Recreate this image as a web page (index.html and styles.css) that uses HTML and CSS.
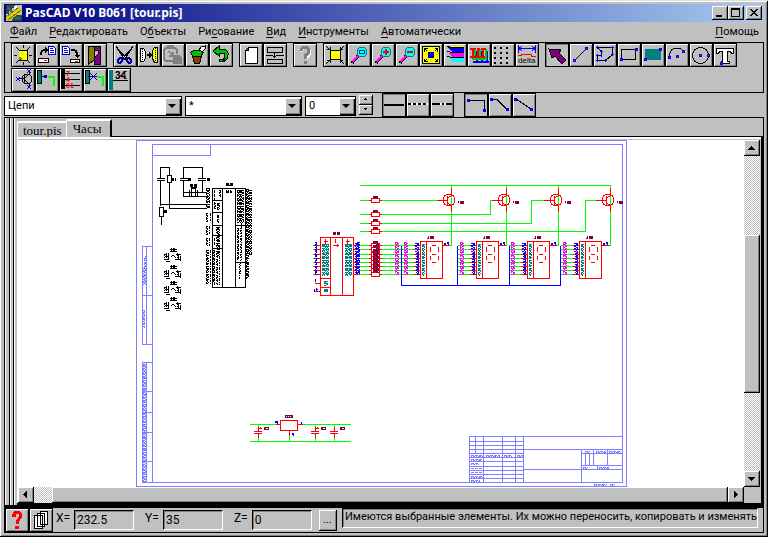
FILE: index.html
```html
<!DOCTYPE html>
<html lang="ru">
<head>
<meta charset="utf-8">
<title>PasCAD V10 B061 [tour.pis]</title>
<link rel="stylesheet" href="styles.css">
</head>
<body>
<div class="window">
  <header class="titlebar">
    <svg class="app-icon" viewBox="0 0 16 16" aria-hidden="true"><path fill="#c0c0c0" d="M0 0h16v16H0z"/><path fill="#404040" d="M0 0h9v3H6v3H3v3H0zM8 10h8v6H6z"/><path fill="#fff" d="M8 1h3v3H8zM1 9h3v2H1z"/><path fill="#e0d000" d="M0 12 12 3h4v3L4 15H0z"/><path stroke="#707000" d="M2 15 15 5M0 12 12 3"/><path stroke="#008080" stroke-width="2" d="m2 3 4 4M9 13h5"/></svg>
    <h1 class="title">PasCAD V10 B061 [tour.pis]</h1>
    <div class="caption-buttons">
      <button class="cap" aria-label="Minimize"><svg viewBox="0 0 12 10"><path d="M2 7h6v2H2z"/></svg></button>
      <button class="cap" aria-label="Maximize"><svg viewBox="0 0 12 10"><path fill-rule="evenodd" d="M1 0h9v9H1zM2 2v6h7V2z"/></svg></button>
      <button class="cap cap-close" aria-label="Close"><svg viewBox="0 0 12 10"><path d="M2 1h2v1h1v1h2V2h1V1h2v1H9v1H8v1H7v1h1v1h1v1h1v1H8V7H7V6H5v1H4v1H2V7h1V6h1V5h1V4H4V3H3V2H2z"/></svg></button>
    </div>
  </header>

  <nav class="menu">
    <a href="#"><u>Ф</u>айл</a>
    <a href="#"><u>Р</u>едактировать</a>
    <a href="#">О<u>б</u>ъекты</a>
    <a href="#">Ри<u>с</u>ование</a>
    <a href="#"><u>В</u>ид</a>
    <a href="#"><u>И</u>нструменты</a>
    <a href="#"><u>А</u>втоматически</a>
    <a href="#" class="menu-help"><u>П</u>омощь</a>
  </nav>

  <div class="toolbar">
    <div class="tool-row">
      <div class="group">
        <button class="tool" aria-label="New"><svg viewBox="1 1 22 22"><path stroke="#000" d="M3 12h3M18 12h3M12 2v3M12 19v3M5 4l3 3M19 4l-3 3M5 20l3-3M19 20l-3-3" fill="none"/><path fill="#000" d="M8 7h9v11H8z"/><path fill="#ff0" d="M8 8h8v9H8z"/><path fill="#808000" d="M8 14h2v1h1v2H8z"/></svg></button>
        <button class="tool" aria-label="Open"><svg viewBox="1 1 22 22"><path fill="#000" d="M5 12V9h1V7h2V6h2V4l4 3-4 3V8H8v1H7v3z"/><path fill="#fff" stroke="#0000c0" d="M13.500 3.500h5l2 2v6h-7z"/><path stroke="#0000c0" d="M15 5.500h3M15 7.500h4M15 9.500h4"/><path fill="#fff" stroke="#000" d="M3.500 15.500h10v4h-10z"/><path fill="red" d="M9 17h3v1H9z"/></svg></button>
        <button class="tool" aria-label="Save"><svg viewBox="1 1 22 22"><path fill="#fff" stroke="#0000c0" d="M3.500 3.500h5l2 2v6h-7z"/><path stroke="#0000c0" d="M5 5.500h3M5 7.500h4M5 9.500h4"/><path fill="#000" d="M12 6h4v1h2v2h1v3h2l-3 3-3-3h2v-2h-1V8h-4z"/><path fill="#fff" stroke="#000" d="M11.500 16.500h9v3h-9z"/><path fill="red" d="M16 18h3v1h-3z"/></svg></button>
        <button class="tool" aria-label="Exit"><svg viewBox="1 1 22 22"><path fill="#808000" stroke="#000" d="M5.500 3.500h6v13l-6 5z"/><path fill="#800080" stroke="#000" d="M11.500 3.500h6v18h-6v-7l4-4v-3h-4z"/></svg></button>
      </div>
      <div class="group">
        <button class="tool" aria-label="Cut"><svg viewBox="1 1 22 22"><path fill="#fff" stroke="#000" d="M3 3.500 14 16l-2 1zM20 3.500 9 16l2 1z"/><path fill="none" stroke="#0000a0" stroke-width="2" d="M9 15c-3 0-4 1-4 3 0 3 3 3 4-1zM14 15c3 0 4 1 4 3 0 3-3 3-4-1z"/></svg></button>
        <button class="tool" aria-label="Convert"><svg viewBox="1 1 22 22"><path fill="#fff" stroke="#000" d="M3.500 5.500h3l2 3v7l-2 3h-3z"/><path fill="#ff0" stroke="#000" d="M20.500 4.500h-3l-2 3v8l2 4h3z"/><path stroke="#000" stroke-dasharray="1 1" d="M5.500 6v12M18.500 5v14"/><path fill="#000" d="M10 11h2V9l3 3-3 3v-2h-2z"/></svg></button>
        <button class="tool" aria-label="Paste" disabled><svg viewBox="1 1 22 22"><path fill="none" stroke="#808080" stroke-width="2" d="M12 18H5l-2-2V7l2-2h9l2 2v4M7 5V3h5v2"/><path fill="#808080" d="M6 8h2l3 3V9h2v5H8v-2h2zM12 12h6l3 3v6h-9z"/></svg></button>
        <button class="tool" aria-label="Delete"><svg viewBox="1 1 22 22"><path fill="#fff" stroke="#000" d="m14 7 2-3 4-1v3l-3 3z"/><path fill="#00c000" stroke="#000" d="M5.500 9.500 9 7.500h6l3 2-2 4H8z"/><path fill="#804000" stroke="#000" d="M7.500 13.500h9l-2 7h-5z"/><path stroke="red" stroke-dasharray="1 1" d="m10 15 4 4m0-4-4 4"/></svg></button>
        <button class="tool" aria-label="Undo"><svg viewBox="1 1 22 22"><path fill="#00c000" stroke="#000" d="m4 8 6-5v3h4q6 1 5 7-1 6-8 6l-1-2q6 0 6-4 0-3-3-3h-3v3z"/><path fill="none" stroke="#005000" d="M17 15q-2 3-6 4"/></svg></button>
      </div>
      <div class="group">
        <button class="tool" aria-label="Page"><svg viewBox="1 1 22 22"><path fill="#fff" stroke="#000" d="M9.500 4.500h9v16h-12v-13z"/><path fill="#008080" stroke="#000" d="M9.500 4.500v3h-3z"/></svg></button>
        <button class="tool" aria-label="Insert row"><svg viewBox="1 1 22 22"><path fill="none" stroke="#000" d="M4.500 4.500h15v5h-15zM4.500 16.500h15v4h-15zM11.500 10v5M9.500 12.500l2 2 2-2M3 12.500h6M14 12.500h7"/></svg></button>
      </div>
      <div class="group">
        <button class="tool" aria-label="Help" disabled><svg viewBox="1 1 22 22"><path fill="none" stroke="#fff" stroke-width="2" d="M9 9q0-4 4-4t4 4-4 7"/><path fill="none" stroke="#808080" stroke-width="3" d="M8 8q0-4 4-4t4 4q0 2-2 3t-2 5"/><path fill="#808080" d="M11 18h3v3h-3z"/></svg></button>
      </div>
      <div class="group">
        <button class="tool" aria-label="Fit"><svg viewBox="1 1 22 22"><path fill="#ff0" stroke="#000" d="M7.500 7.500h10v9h-10z"/><path fill="none" stroke="#000" d="m3 3 4 4V4M7 6.500H4M21 3l-4 4V4m0 2.500h3M3 21l4-4v3m0-2.500H4M21 21l-4-4v3m0-2.500h3"/></svg></button>
        <button class="tool" aria-label="Zoom window"><svg viewBox="1 1 22 22"><path stroke="#000" stroke-width="3" d="m5 20 6-7"/><path stroke="#f0f" stroke-width="2" d="m5 19 6-6"/><circle cx="15" cy="9" r="5" fill="#0ff" stroke="#008080"/><path fill="none" stroke="#004080" d="M12.500 7.500h5v3h-5z"/></svg></button>
        <button class="tool" aria-label="Zoom in"><svg viewBox="1 1 22 22"><path stroke="#000" stroke-width="3" d="m5 20 6-7"/><path stroke="#f0f" stroke-width="2" d="m5 19 6-6"/><circle cx="15" cy="9" r="5" fill="#0ff" stroke="#008080"/><path stroke="red" stroke-width="2" d="M12 9h6M15 6v6"/></svg></button>
        <button class="tool" aria-label="Zoom out"><svg viewBox="1 1 22 22"><path stroke="#000" stroke-width="3" d="m5 20 6-7"/><path stroke="#f0f" stroke-width="2" d="m5 19 6-6"/><circle cx="15" cy="9" r="5" fill="#0ff" stroke="#008080"/><path stroke="red" stroke-width="2" d="M12 9h6"/></svg></button>
        <button class="tool" aria-label="Show all"><svg viewBox="1 1 22 22"><path fill="#ff0" stroke="#000" d="M3.500 3.500h17v17h-17z"/><circle cx="12" cy="12" r="3" fill="#00f" stroke="#000080"/><path fill="none" stroke="#000" d="m8 8-2.500-2.500v3m0-3h3M16 8l2.500-2.500v3m0-3h-3M8 16l-2.500 2.500v-3m0 3h3M16 16l2.500 2.500v-3m0 3h-3"/></svg></button>
        <button class="tool" aria-label="Layers"><svg viewBox="1 1 22 22"><path fill="#ff0" d="M6 3h15v1H7z"/><path fill="#00f" d="M5 4h16v5H9z"/><path fill="#f0f" d="M5 10h16v4H9z"/><path fill="#0ff" d="M5 15h16v4H9z"/><path stroke="#000" fill="none" d="m4 3 5 1.500h12M4 8l5 1.500h12M4 13l5 1.500h12"/></svg></button>
        <button class="tool" aria-label="Buses"><svg viewBox="1 1 22 22"><path fill="none" stroke="#00f" stroke-width="2" d="M6 19h16M10 8v11M15 8v11M20 8v11"/><path fill="none" stroke="#0c0" stroke-width="2" d="M5 16h15M8 6v10M13 6v10M19 6v10"/><path fill="none" stroke="red" stroke-width="2" d="M3 14h15M6 5v9M11 5v9M16 5v9M3 6h6M10 6h3M14 6h5"/></svg></button>
        <button class="tool" aria-label="Grid"><svg viewBox="1 1 22 22"><path stroke="#000" stroke-width="2" stroke-dasharray="2 4" d="M3 5h18M3 10h18M3 15h18M3 20h18"/></svg></button>
        <button class="tool" aria-label="Delta"><svg viewBox="1 1 22 22"><path fill="none" stroke="#00f" d="M3.500 2v8M20.500 2v8M4 5.500h16M7 3 4 5.500 7 8m10-5 3 2.500L17 8"/><path fill="none" stroke="red" d="M3 12.500h3l1-1h9l1 2h4"/><text class="delta" x="3" y="20">delta</text></svg></button>
      </div>
      <div class="group">
        <button class="tool pressed" aria-label="Select"><svg viewBox="1 1 22 22"><path fill="#800080" stroke="#000" d="m4 6 12 1-2 3 7 7-4 4-7-8-3 2z"/></svg></button>
        <button class="tool" aria-label="Line"><svg viewBox="1 1 22 22"><path stroke="#000" d="M5 18 18 5"/><path fill="red" stroke="#00f" d="M4.500 16.500h2v2h-2zM16.500 4.500h2v2h-2z"/></svg></button>
        <button class="tool" aria-label="Polygon"><svg viewBox="1 1 22 22"><path fill="none" stroke="#000" d="M4.500 4.500h15v7l-7 6h-8v-5h4v-4z"/><path fill="#00f" d="M4 3h1v3H4zM3 4h3v1H3zM19 3h1v3h-1zM18 4h3v1h-3zM19 10h1v3h-1zM18 11h3v1h-3zM12 16h1v3h-1zM11 17h3v1h-3zM4 16h1v3H4zM3 17h3v1H3zM4 11h1v3H4zM3 12h3v1H3zM8 7h1v3H8zM7 8h3v1H7zM8 11h1v3H8z"/></svg></button>
        <button class="tool" aria-label="Rectangle"><svg viewBox="1 1 22 22"><path fill="none" stroke="#000" d="M4.500 6.500h14v10h-14z"/><path fill="red" stroke="#00f" d="M3.500 15.500h2v2h-2zM18.500 5.500h2v2h-2z"/></svg></button>
        <button class="tool" aria-label="Filled rectangle"><svg viewBox="1 1 22 22"><path fill="#008080" d="M4 6h16v11H4z"/><path fill="red" stroke="#00f" d="M3.500 15.500h2v2h-2zM18.500 5.500h2v2h-2z"/></svg></button>
        <button class="tool" aria-label="Arc"><svg viewBox="1 1 22 22"><path fill="none" stroke="#000" d="M4.500 14q0-9 7-9 5 0 7 4"/><path fill="red" stroke="#00f" d="M3.500 13.500h2v2h-2zM11.500 12.500h2v2h-2zM17.500 7.500h2v2h-2z"/></svg></button>
        <button class="tool" aria-label="Circle"><svg viewBox="1 1 22 22"><circle cx="11.500" cy="12.500" r="8" fill="none" stroke="#000"/><path fill="red" stroke="#00f" d="M10.500 11.500h2v2h-2zM18.500 11.500h2v2h-2z"/></svg></button>
        <button class="tool" aria-label="Text"><svg viewBox="1 1 22 22"><path fill="#fff" stroke="#000" d="M3.500 5.500h17v5h-2l-1-2h-3v10h2v2h-8v-2h1v-10h-3l-1 2h-2z"/><path fill="red" stroke="#00f" d="M7.500 19.500h2v2h-2z"/></svg></button>
      </div>
    </div>
    <div class="tool-row">
      <div class="group">
        <button class="tool" aria-label="Component"><svg viewBox="1 1 22 22"><circle cx="16" cy="11" r="5" fill="none" stroke="#000"/><path fill="none" stroke="#000" d="M7 10.500h7M13.500 6v10M14 10l4-4V2M14 12l4 4v4"/><path fill="none" stroke="#00f" d="m5 9 4 4m0-4-4 4M16 1l4 4m0-4-4 4M16 17l4 4m0-4-4 4"/></svg></button>
        <button class="tool" aria-label="Wire"><svg viewBox="1 1 22 22"><path fill="#008080" stroke="#000" d="M2 2.500h4.500v13H2z"/><path stroke="#0000c0" d="M7 8.500h5"/><path fill="#0000c0" d="M9 7h3v3H9z"/><path fill="none" stroke="#0f0" stroke-width="2" d="M13 9h6v9"/></svg></button>
        <button class="tool" aria-label="Numbers"><svg viewBox="1 1 22 22"><path d="M2 1h4v20H2z"/><path stroke="#000" d="M6 5.500h15M6 11.500h15M6 17.500h15"/><g class="pin"><text x="7" y="8">7</text><text x="7" y="14">4</text><text x="7" y="20">01</text></g></svg></button>
        <button class="tool" aria-label="Remove wire"><svg viewBox="1 1 22 22"><path fill="#008080" stroke="#000" d="M2 2.500h4.500v13H2z"/><path stroke="#0000c0" d="m7 5 7 7m0-7-7 7M5 8.500h9"/><path fill="none" stroke="#0f0" stroke-width="2" d="M14 9h6v9"/></svg></button>
        <button class="tool" aria-label="Renumber"><svg viewBox="1 1 22 22"><path fill="#008080" d="M2 2h4v20H2z"/><path stroke="#000" d="M6 12.500h15"/><path fill="none" stroke="#b00000" stroke-dasharray="2 1" d="m9 3 11 8M20 3 9 11"/><text class="num" x="8" y="11">34</text></svg></button>
      </div>
    </div>
  </div>

  <div class="props">
    <label class="combo combo-layer"><select aria-label="Слой"><option>Цепи</option></select></label>
    <label class="combo combo-name"><select aria-label="Имя"><option>*</option></select></label>
    <label class="combo combo-width"><select aria-label="Толщина"><option>0</option></select></label>
    <div class="spinner">
      <button aria-label="Больше"><svg viewBox="0 0 5 3"><path d="M2 0h1v1h1v1H1V1h1z"/></svg></button>
      <button aria-label="Меньше"><svg viewBox="0 0 5 3"><path d="M1 0h3v1H3v1H2V1H1z"/></svg></button>
    </div>
    <div class="group lines">
      <button class="tool pressed" aria-label="Solid"><svg viewBox="1 1 22 22"><path fill="#000" d="M2 11h20v2H2z"/></svg></button>
      <button class="tool" aria-label="Dotted"><svg viewBox="1 1 22 22"><path fill="#fff" d="M2 10h20v2H2z"/><path stroke="#000" stroke-width="2" stroke-dasharray="3 2" d="M2 11h20"/></svg></button>
      <button class="tool" aria-label="Dash-dot"><svg viewBox="1 1 22 22"><path fill="#fff" d="M2 10h20v2H2z"/><path stroke="#000" stroke-width="2" stroke-dasharray="8 2 2 2" d="M2 11h20"/></svg></button>
    </div>
    <div class="group">
      <button class="tool pressed" aria-label="Right angle"><svg viewBox="1 1 22 22"><path fill="none" stroke="#000" d="M3 7.500h17.500v10"/><path fill="#00f" d="M3 6h3v3H3zM19 16h3v3h-3z"/></svg></button>
      <button class="tool" aria-label="Diagonal corner"><svg viewBox="1 1 22 22"><path fill="none" stroke="#000" d="M4 6.500h5l10 10"/><path fill="#00f" d="M2 5h3v3H2zM18 15h3v3h-3z"/></svg></button>
      <button class="tool" aria-label="Direct"><svg viewBox="1 1 22 22"><path fill="none" stroke="#000" d="m4 6 15 10"/><path fill="#00f" d="M2 5h3v3H2zM18 15h3v3h-3z"/></svg></button>
    </div>
  </div>

  <main class="workspace">
    <div class="tabs" role="tablist">
      <button class="tab" role="tab">tour.pis</button>
      <button class="tab active" role="tab" aria-selected="true">Часы</button>
    </div>
    <div class="view" id="view">
      <div class="canvas">
        <svg class="sheet" viewBox="18 140 726 347" role="img" aria-label="Часы">
          <defs>
            <g id="pins"><path d="M0 .5h7M0 4.500h7M0 9.500h7M0 13.500h7M0 17.500h7M0 21.500h7M0 25.500h7M0 29.500h7"/></g>
            <g id="resistor"><path stroke="red" fill="#fff" d="M371.500-2.500h8v4h-8zM369-.5h2M380-.5h2"/><path stroke="#800040" stroke-width="2" d="M373-4h5"/><path stroke="#800040" d="M373.500-4v2M377.500-4v2"/></g>
            <g id="digit">
              <g stroke="#0f0"><use href="#pins" x="402" y="245"/><use href="#pins" x="408" y="245"/></g>
              <g stroke="red"><use href="#pins" x="414" y="245"/></g>
              <path class="magenta n1" d="M404.500 242v33"/><path class="magenta n2" d="M405.500 242v33"/><path class="magenta n3" d="M406.500 242v33"/><path class="magenta n4" d="M407.500 243v32"/>
              <path class="blue n2" d="M415.500 243v9M416.500 243v32"/><path class="blue n3" d="M417.500 243v32"/><path class="blue n1" d="M418.500 243v32"/>
              <path stroke="red" fill="#fff" d="M420.500 241.500h22v37h-22zM426.500 241v37"/>
              <path class="teal n1" d="M422.500 244v32"/><path class="teal n3" d="M423.500 244v32"/><path class="teal n2" d="M424.500 244v32"/>
              <path stroke="red" d="M432 245.500h4M430.500 247v5M438.500 247v5M432 254.500h4M430.500 256v4M438.500 256v4M432 262.500h4M443 245.500h7"/>
              <path stroke="#00f" stroke-width="2" d="M444 244h2M447 243h2"/><path stroke="#00f" d="M445.500 243v2M448.500 242v3"/>
              <path stroke="#800040" stroke-width="3" d="M430 237.500h4"/><path stroke="#800040" d="M427 238.500h2M428.500 236v3"/>
            </g>
            <g id="transistor">
              <circle cx="449" cy="200" r="6" fill="none" stroke="red"/>
              <path fill="none" stroke="red" d="M437 200.500h10M447.500 196v9M447 198.500l4.500-3V188M447 202.500l4.500 3V212"/>
              <path stroke="#800040" stroke-width="3" stroke-dasharray="4 1" d="M460 202.500h5"/><path stroke="#800040" d="M458.500 201v2"/>
            </g>
            <g id="cap"><path stroke="red" d="M-4 .5h8M-4 2.500h8M.5-4V0M.5 3v4"/><path stroke="#0f0" d="M.5-7v3M.5 7v3"/><path stroke="#800040" stroke-width="3" d="M6-2.500h5"/><path stroke="#fff" d="M8-2.500h2"/></g>
            <g id="contact"><path stroke="#000" d="M170 249.500h7M170 251.500h7M171.500 248v3M174.500 248v4M164 254.500h3M165 256.500h4M164 259.500h5M168.500 253v7M171 256.500l2-1 3 2M166 261.500h4M176 254.500h5M178.500 255v4M175 259.500h6M180.500 256v5M173.500 248v4"/><path stroke="#000" stroke-dasharray="1 1" d="M166.500 253v8M177.500 253v8M164.500 255v6"/></g>
          </defs>

          <g class="line" stroke="#8080ff">
            <path d="M136.500 140.500h490v346h-490zM152.500 144.500h470v338h-470zM152.500 155.500h58v-11"/>
            <path d="M142.500 246.500h10M142.500 246v98M146.500 246v98M142 295.500h10M142 344.500h10M142.500 362v120M146.500 362v120M142 362.500h10M142 391.500h10M142 412.500h10M142 432.500h10M142 461.500h10M142 482.500h10"/>
            <path class="n1" d="M143.500 364v118M144.500 258v26M144.500 310v18"/><path class="n3" d="M144.500 364v118M145.500 256v30"/><path class="n4" d="M145.500 364v118M143.500 310v18M143.500 268v18"/>
            <path d="M469.500 482V436.500h153M475.500 436v18M483.500 436v46M502.500 436v46M515.500 436v46M523.500 436v46M469 441.500h54M469 445.500h54M469 449.500h153M469 453.500h54M469 457.500h54M469 461.500h54M469 466.500h54M469 470.500h54M469 474.500h54M469 478.500h54M523 469.500h99M581.500 449v33M581 453.500h41M581 465.500h41M585.500 453v12M589.500 453v12M593.500 449v16M607.500 449v16M597.500 465v4"/>
            <path class="n1" d="M471 455.500h12M486 455.500h14M504 455.500h8M517 455.500h6M471 459.500h11M471 463.500h8M471 468.500h12M471 472.500h11M471 476.500h12M471 480.500h9M585 451.500h5M596 451.500h10M609 451.500h12M583 467.500h5M599 467.500h10M594 484.500h13M610 484.500h5"/>
            <path class="n4" d="M471 456.500h12M486 456.500h14M504 456.500h8M517 456.500h6M471 460.500h11M471 464.500h8M471 477.500h12M471 481.500h9M585 452.500h5M596 452.500h10M609 452.500h12M583 468.500h5M599 468.500h10M594 485.500h13M610 485.500h5"/>
          </g>

          <g class="line" stroke="#000">
            <path d="M212.500 188.500h33v99h-33zM222.500 188v99M235.500 188v99M212 200.500h10M212 212.500h10M212 225.500h10M212 235.500h10M212 248.500h10M235 225.500h10M235 262.500h10"/>
            <path d="M160.500 178V167.500h9V175M157 178.500h8M157 180.500h8M160.500 181v25M167.500 175.500h4v7h-4zM169.500 183v25.500H207M160 204.500h47M159.500 207.500h4v9h-4zM161.500 217v8"/>
            <path d="M183.500 178V167.500h19V178M180 178.500h8M180 180.500h8M198 178.500h8M198 180.500h8M183.500 181v15.500H207M202.500 181v11.500M183 192.500h24M191.500 188.500h4v8h-4zM189.500 190v6M197.500 190v6"/>
            <path class="n1" d="M206.500 188v20M206.500 213v9M206.500 226v9M206.500 238v8M206.500 250v34M214.500 190v20M214.500 238v8M214.500 250v35M217.500 203v7M217.500 215v8M217.500 227v58M220.500 190v8M237.500 190v33M240.500 190v33M238.500 228v32M246.500 189v90"/>
            <path class="n2" d="M208.500 188v20M208.500 250v34M215.500 203v7M216.500 227v58M219.500 203v7M219.500 190v8M238.500 190v33M242.500 190v33M240.500 228v48M250.500 190v65"/>
            <path class="n3" d="M209.500 188v20M210.500 213v9M209.500 226v9M209.500 238v8M210.500 250v34M218.500 203v7M218.500 215v8M218.500 227v30M239.500 190v33M241.500 190v70M248.500 189v70M226.500 190v4M228.500 190v4M230.500 190v4M248.500 262v16"/>
            <path class="n4" d="M207.500 188v20M207.500 213v9M207.500 226v9M207.500 238v8M207.500 250v34M213.500 250v32M219.500 227v58M243.500 190v33M237.500 228v32M239.500 264v16M251.500 190v66M247.500 189v90M249.500 190v66"/>
            <path stroke-width="3" stroke-dasharray="3 1" d="M226 184.500h7M190 185.500h7M171 179.500h5M188 179.500h4M207 179.500h4M164 211.500h4"/>
            <path stroke-width="2" stroke-dasharray="3 1 2 1" d="M226 192h6"/><path d="M226 185.500h6M191 187.500h6"/>
            <use href="#contact"/><use href="#contact" y="17"/><use href="#contact" y="33"/><use href="#contact" y="49"/>
          </g>

          <g class="line" stroke="#0f0">
            <path d="M360 185.500h250.500V245.500H605M451.500 185v60.500H448M506.500 185v60.500H504M558.500 185v60.500H555"/>
            <path d="M360 200.500h77M360 214.500h130.500v-14H493M360 223.500h171.500v-23H545M360 231.500h225.500v-31H597"/>
            <g><use href="#pins" x="360" y="245"/><use href="#pins" x="365" y="245"/><use href="#pins" x="382" y="245"/><use href="#pins" x="389" y="245"/><use href="#pins" x="396" y="245"/></g>
            <path d="M313 245.500h2M313 249.500h2M313 254.500h2M313 258.500h2M313 262.500h2M313 266.500h2M313 270.500h2M313 274.500h2"/>
          </g>

          <g class="line">
            <path stroke="red" fill="#fff" d="M320.500 237.500h33v58h-33zM330.500 237v58M342.500 237v58M320 278.500h10M320 287.500h10M315 283.500h5M315 291.500h5"/>
            <g stroke="red"><use href="#pins" x="314" y="245"/><use href="#pins" x="353" y="245"/></g>
            <path stroke="red" d="M325.500 239v5M324 241.500h4M335.500 239v4M333 245.500h6M337.500 244v3M347.500 239v5M346 241.500h4"/>
            <path class="blue n1" d="M316.500 242v33M315.500 279v4M314.500 289v3M316.500 288v4"/><path class="blue n4" d="M315.500 242v33"/><path class="blue n2" d="M317.500 289v3"/><path class="blue n1" d="M356.500 243v32M358.500 242v32"/><path class="blue n2" d="M355.500 243v32"/><path class="blue n3" d="M357.500 242v32"/><path class="blue n4" d="M359.500 242v32"/>
            <path class="teal n3" d="M322.500 244v32M345.500 244v32M324.500 281v5M325.500 289v4"/><path class="teal n1" d="M323.500 244v32M326.500 244v32M346.500 244v32M349.500 244v32M326.500 289v4M325.500 281v5M327.500 289v4"/><path class="teal n2" d="M325.500 244v32M348.500 244v32M326.500 281v5"/><path class="teal n3" d="M324.500 244v32M347.500 244v32M350.500 244v32"/><path class="teal n4" d="M327.500 244v32M327.500 281v5"/><path class="teal n1" d="M328.500 244v32M351.500 244v32M324.500 289v4"/>
            <path stroke="#800040" stroke-width="3" stroke-dasharray="3 1" d="M333 233.500h7"/>
            <use href="#resistor" y="201"/><use href="#resistor" y="215"/><use href="#resistor" y="224"/><use href="#resistor" y="232"/>
            <use href="#resistor" y="246"/><use href="#resistor" y="250"/><use href="#resistor" y="255"/><use href="#resistor" y="259"/><use href="#resistor" y="263"/><use href="#resistor" y="267"/><use href="#resistor" y="271"/><use href="#resistor" y="275"/>
            <path stroke="#800040" stroke-width="3" stroke-dasharray="3 1" d="M374.500 245v28M377.500 244v29"/>
            <path class="magenta n1" d="M395.500 242v33"/><path class="magenta n2" d="M396.500 242v33"/><path class="magenta n3" d="M397.500 242v33"/><path class="magenta n4" d="M398.500 243v32"/>
            <use href="#digit"/><use href="#digit" x="56"/><use href="#digit" x="107"/><use href="#digit" x="159"/>
            <use href="#transistor"/><use href="#transistor" x="55"/><use href="#transistor" x="107"/><use href="#transistor" x="159"/>
            <path stroke="#00f" d="M401.500 246v39.500h159V246M457.500 246v39M509.500 246v39"/>
          </g>

          <g class="line">
            <path stroke="#0f0" d="M250 424.500h101M250 441.500h101M289.500 436v5"/>
            <path stroke="red" fill="#fff" d="M280.500 420.500h17v10h-17zM276 424.500h4M298 424.500h5M289.500 431v5"/>
            <use href="#cap" x="258" y="431"/><use href="#cap" x="315" y="431"/><use href="#cap" x="334" y="431"/>
            <path stroke="red" d="M260.500 427v2M259 428.500h3M317.500 427v2M316 428.500h3"/>
            <path stroke="#800040" stroke-width="3" d="M285 416.500h8"/><path stroke="#fff" stroke-dasharray="1 1" d="M286 416.500h6"/>
            <path stroke="#00f" stroke-width="2" d="M275 422h3M292 434h2M301 423h1"/><path stroke="#00f" d="M277.500 422v2M293.500 433v3"/>
          </g>
        </svg>
      </div>
      <div class="scroll vertical" role="scrollbar" aria-controls="view" aria-orientation="vertical" aria-valuenow="50">
        <button class="arrow" aria-label="Вверх"><svg viewBox="0 0 7 7"><path d="M3 2h1v1h1v1h1v1h1v1H0V5h1V4h1V3h1z"/></svg></button>
        <span class="track before"></span><span class="thumb"></span><span class="track after"></span>
        <button class="arrow" aria-label="Вниз"><svg viewBox="0 0 7 7"><path d="M0 2h7v1H6v1H5v1H4v1H3V5H2V4H1V3H0z"/></svg></button>
      </div>
      <div class="scroll horizontal" role="scrollbar" aria-controls="view" aria-orientation="horizontal" aria-valuenow="5">
        <button class="arrow" aria-label="Влево"><svg viewBox="0 0 7 7"><path d="M5 0v7H4V6H3V5H2V4H1V3h1V2h1V1h1V0z"/></svg></button>
        <span class="track before"></span><span class="thumb"></span>
        <button class="arrow" aria-label="Вправо"><svg viewBox="0 0 7 7"><path d="M2 0v7h1V6h1V5h1V4h1V3H5V2H4V1H3V0z"/></svg></button>
      </div>
    </div>
  </main>

  <footer class="status">
    <div class="group">
      <button class="tool" aria-label="Справка"><svg viewBox="1 1 22 22"><path fill="none" stroke="red" stroke-width="3" d="M9 9V6q0-2 3-2t4 3q0 2-2 4t-2 5"/><path fill="red" d="M7 6h4v3H7zM10 18h4v3h-4z"/></svg></button>
      <button class="tool" aria-label="Листы"><svg viewBox="1 1 22 22"><path fill="#fff" stroke="#000" d="M11.500 3.500h7v13h-7zM8.500 5.500h7v13h-7zM5.500 7.500h8v13h-8z"/></svg></button>
    </div>
    <label class="coord">X=<input value="232.5"></label>
    <label class="coord">Y=<input value="35"></label>
    <label class="coord">Z=<input value="0"></label>
    <button class="more">...</button>
    <output class="message">Имеются выбранные элементы. Их можно переносить, копировать и изменять</output>
  </footer>
</div>
</body>
</html>
```
FILE: styles.css
```css
* { box-sizing: border-box; }

:root {
  --face: #c0c0c0;
  --raised: inset 1px 1px #fff, inset -1px -1px #808080;
}

body {
  margin: 0;
  background: var(--face);
  color: #000;
  font: 11px/16px Roboto, "Liberation Sans", sans-serif;
}

button, input, select {
  margin: 0;
  padding: 0;
  border: 0;
  border-radius: 0;
  background: var(--face);
  color: #000;
  font: inherit;
}

svg { display: block; shape-rendering: crispEdges; }

.window {
  display: flex;
  flex-direction: column;
  min-height: 100vh;
  padding: 4px;
  box-shadow: inset 0 1px #dfdfdf, inset -1px -1px #000, inset 1px 2px #fff, inset -2px -2px #808080;
}

/* Title bar */
.titlebar {
  display: flex;
  align-items: center;
  height: 18px;
  padding: 0 2px;
  background: linear-gradient(90deg, #000080, #a6caf0);
}
.app-icon { width: 16px; height: 16px; }
.title {
  flex: 1;
  margin: 0 0 0 3px;
  color: #fff;
  font: bold 12px/18px "Noto Sans", "Open Sans", sans-serif;
}
.caption-buttons { display: flex; }
.cap {
  width: 16px;
  height: 14px;
  padding: 2px;
  border-right: 1px solid #000;
  border-bottom: 1px solid #000;
  box-shadow: var(--raised);
}
.cap svg { width: 12px; height: 10px; }
.cap-close { margin-left: 2px; }

/* Menu */
.menu {
  display: flex;
  gap: 12px;
  height: 20px;
  padding: 2px 5px 2px 6px;
}
.menu a { color: #000; text-decoration: none; }
.menu u { text-underline-offset: 2px; }
.menu-help { margin-left: auto; }

/* Toolbars */
.toolbar {
  display: flex;
  flex-direction: column;
  gap: 1px;
  padding-left: 6px;
  border: 1px solid #000;
}
.tool-row { display: flex; gap: 6px; }
.group { display: flex; }
.tool {
  width: 24px;
  height: 24px;
  border: 1px solid #000;
  box-shadow: var(--raised);
}
.tool svg { width: 22px; height: 22px; }
.tool.pressed { box-shadow: inset 1px 1px #808080; }
.delta { font: 8px "Liberation Sans", sans-serif; }
.pin { fill: red; font: bold 7px "Liberation Sans", sans-serif; }
.num { font: bold 10px "Liberation Sans", sans-serif; }

/* Properties row */
.props {
  display: flex;
  gap: 3px;
  height: 24px;
}
.combo {
  position: relative;
  height: 20px;
  margin-top: 3px;
  border: 1px solid #000;
  background: #fff;
}
.combo select {
  width: 100%;
  height: 18px;
  padding: 0 18px 0 3px;
  appearance: none;
  background: #fff;
}
.combo::before {
  content: "";
  position: absolute;
  top: 1px;
  right: 1px;
  width: 15px;
  height: 16px;
  background: var(--face);
  box-shadow: var(--raised), 1px 1px #000;
  pointer-events: none;
}
.combo::after {
  content: "";
  position: absolute;
  top: 7px;
  right: 5px;
  border: 4px solid transparent;
  border-top-color: #000;
  border-bottom: 0;
  pointer-events: none;
}
.combo-layer { width: 178px; }
.combo-name { width: 117px; }
.combo-width { width: 51px; }
.spinner {
  display: flex;
  flex-direction: column;
  width: 14px;
  margin-top: 2px;
}
.spinner button {
  height: 10px;
  padding: 3px 4px;
  border-right: 1px solid #000;
  border-bottom: 1px solid #000;
  box-shadow: var(--raised);
}
.spinner svg { width: 5px; height: 3px; }
.props .lines { margin: 0 7px 0 6px; }

/* Document area */
.workspace {
  display: flex;
  flex: 1;
  flex-direction: column;
  padding-left: 12px;
  border: solid #000;
  border-width: 1px 1px 0;
  background:
    linear-gradient(90deg, #fff 1px, var(--face) 1px 4px, #000 4px 5px, #fff 5px 6px, var(--face) 6px 8px, #000 8px 9px, #fff 9px 10px, var(--face) 10px);
}
.tabs {
  display: flex;
  align-items: flex-end;
  height: 19px;
}
.tabs::after {
  content: "";
  flex: 1;
  height: 1px;
  background: #000;
}
.tab {
  height: 16px;
  padding: 0 4px 0 5px;
  border-top: 2px solid #fff;
  border-left: 1px solid #fff;
  border-radius: 2px 0 0;
  font: 13px/15px "Liberation Serif", serif;
}
.tab.active {
  height: 18px;
  padding: 0 9px 0 6px;
  border-right: 2px solid #000;
  line-height: 16px;
}
.view {
  display: grid;
  flex: 1;
  grid-template-columns: 1fr 16px;
  grid-template-rows: 1fr 16px;
  border: solid #000;
  border-width: 0 2px 2px 0;
  box-shadow: inset 1px 2px #fff;
  padding: 3px 1px 0;
}
.canvas { overflow: hidden; background: #fff; }
.sheet { width: 726px; height: 347px; }
.line { fill: none; }
.n1 { stroke-dasharray: 3 1; }
.n2 { stroke-dasharray: 1 1 2 1 1 2; }
.n3 { stroke-dasharray: 3 1 1 1 2 1 2 1; }
.n4 { stroke-dasharray: 1 1 2 1 1 1 3 1; }
.magenta { stroke: #f0f; }
.blue { stroke: #00f; }
.teal { stroke: #008080; }

.scroll { display: flex; }
.vertical { flex-direction: column; }
.arrow, .thumb {
  background: var(--face);
  border: solid #000;
  border-width: 0 1px 1px 0;
  box-shadow: var(--raised);
}
.arrow {
  flex: none;
  width: 16px;
  height: 16px;
  padding: 4px;
}
.arrow svg { width: 7px; height: 7px; }
.track { background: conic-gradient(#fff 25%, var(--face) 0 50%, #fff 0 75%, var(--face) 0) 0 0 / 2px 2px; }
.vertical .before, .vertical .after { flex: 1; }
.vertical .thumb { flex: 2; }
.horizontal .before { width: 18px; }
.horizontal .thumb { flex: 1; }

/* Status bar */
.status {
  display: flex;
  height: 28px;
  padding: 0 5px 0 0;
  border: solid #000;
  border-width: 3px 1px 1px;
}
.coord {
  display: flex;
  gap: 4px;
  margin: 2px 7px 0 3px;
  font-size: 12px;
}
.coord + .coord { margin-left: 4px; }
.coord input, .message {
  height: 20px;
  border: 1px solid;
  border-color: #000 #fff #fff #000;
  box-shadow: inset 1px 1px #808080;
}
.coord input { width: 60px; padding-left: 2px; }
.more {
  width: 24px;
  height: 21px;
  margin: 2px 5px 0 0;
  border: solid #000;
  border-width: 0 1px 1px 0;
  box-shadow: var(--raised);
}
.message {
  flex: 1;
  padding-left: 2px;
  white-space: nowrap;
}
```
